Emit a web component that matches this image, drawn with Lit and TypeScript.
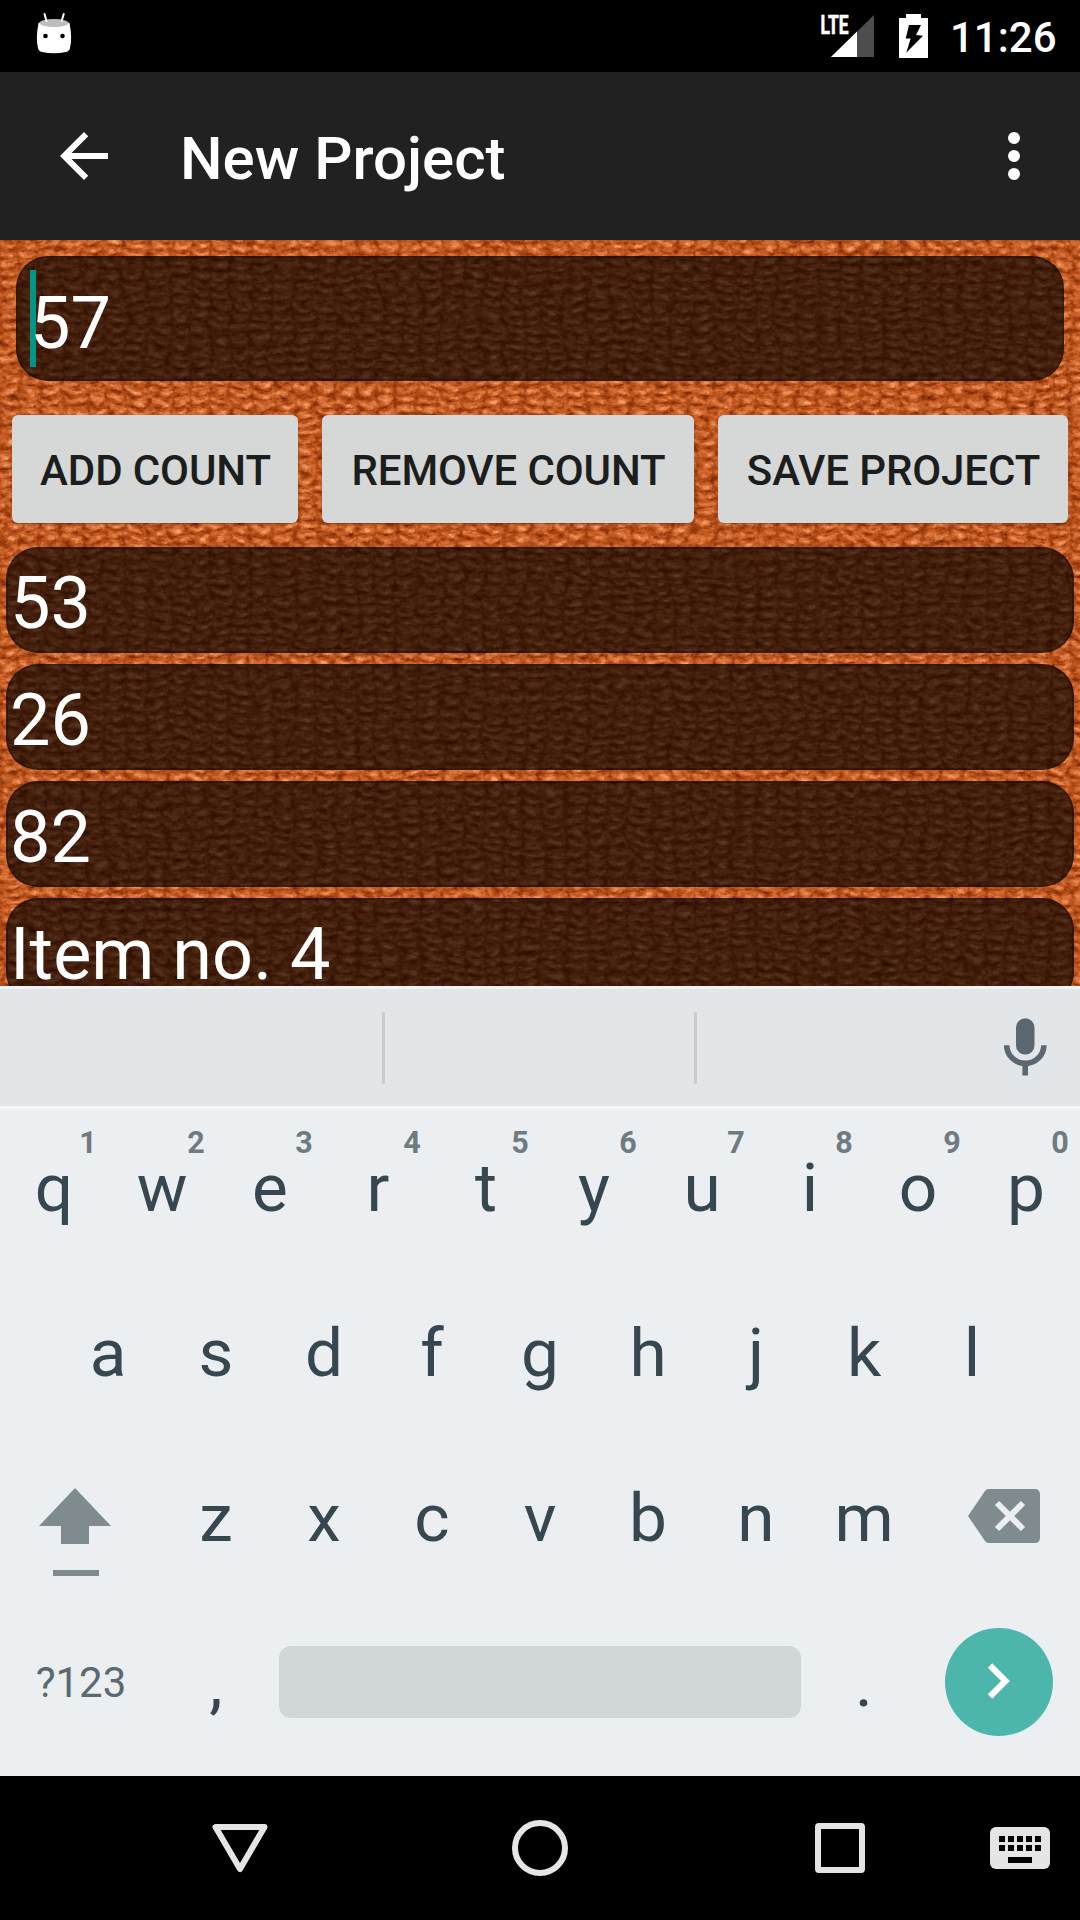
import { LitElement, html, css, svg } from "lit";
import { customElement, state } from "lit/decorators.js";

/** Woven wool surface: stitch pattern, warped and mixed with fibre noise. */
@customElement("knit-backdrop")
export class KnitBackdrop extends LitElement {
  static styles = css`
    :host { display: block; overflow: hidden; }
    svg { display: block; width: 100%; height: 100%; }
  `;
  render() {
    return html`<svg viewBox="0 0 1080 746" preserveAspectRatio="none" aria-hidden="true">
      <defs>
        <pattern id="stitch" width="21" height="10.500" patternUnits="userSpaceOnUse">
          <rect width="21" height="10.500" fill="#787878"></rect>
          <path d="M0 0V10.500M21 0V10.500" stroke="#636363" stroke-width="5"></path>
          <path d="M3 2.500 L10 6 L18 3.500" stroke="#989898" stroke-width="3.400" fill="none" stroke-linecap="round"></path>
          <path d="M10 5 L14 6" stroke="#bcbcbc" stroke-width="3" fill="none" stroke-linecap="round"></path>
          <path d="M2 8.500 L9 10 L17 8.500" stroke="#515151" stroke-width="2" fill="none"></path>
        </pattern>
        <filter id="wool" x="0" y="0" width="100%" height="100%" color-interpolation-filters="sRGB">
          <feTurbulence type="fractalNoise" baseFrequency="0.014 0.02" numOctaves="3" seed="8" result="warp"></feTurbulence>
          <feDisplacementMap in="SourceGraphic" in2="warp" scale="24" xChannelSelector="R" yChannelSelector="G" result="knit"></feDisplacementMap>
          <feGaussianBlur in="knit" stdDeviation="0.7" result="soft"></feGaussianBlur>
          <feTurbulence type="fractalNoise" baseFrequency="0.11 0.18" numOctaves="3" seed="21" result="fibre"></feTurbulence>
          <feColorMatrix in="fibre" type="matrix" values="1 0 0 0 0  1 0 0 0 0  1 0 0 0 0  0 0 0 0 1" result="grey"></feColorMatrix>
          <feComposite in="soft" in2="grey" operator="arithmetic" k1="0" k2="0.85" k3="0.65" k4="-0.22" result="mix"></feComposite>
          <feComponentTransfer in="mix">
            <feFuncR type="table" tableValues="0.2 0.52 0.75 0.9 0.99"></feFuncR>
            <feFuncG type="table" tableValues="0.04 0.18 0.34 0.52 0.72"></feFuncG>
            <feFuncB type="table" tableValues="0 0.03 0.12 0.3 0.5"></feFuncB>
            <feFuncA type="linear" slope="0" intercept="1"></feFuncA>
          </feComponentTransfer>
        </filter>
      </defs>
      <g filter="url(#wool)"><rect x="-20" y="-20" width="1120" height="786" fill="url(#stitch)"></rect></g>
    </svg>`;
  }
}

@customElement("status-bar")
export class StatusBar extends LitElement {
  static styles = css`
    :host { display: flex; height: 72px; background: #000; color: #fff; align-items: flex-start; }
    svg { display: block; flex: none; }
    .debug { margin-left: 30px; }
    .signal { margin-left: auto; }
    .battery { margin-left: 18px; }
    .time { font: 500 42px/72px Roboto, sans-serif; width: 106px; margin: 2px 24px 0 14px; box-sizing: border-box; white-space: nowrap; }
  `;
  render() {
    return html`
      <svg class="debug" width="48" height="72" viewBox="30 0 48 72">
        <path d="M38.500 23 Q54 16 69.500 23 Q72.500 38 70 48 Q69.500 51 66 52 Q54 54.500 42 52 Q38.500 51 38 48 Q35.500 38 38.500 23Z" fill="#fff"></path>
        <ellipse cx="54" cy="23" rx="14.500" ry="4" fill="#bdbdbd"></ellipse>
        <path d="M44.500 14 L46.500 21 M63.700 14 L61.700 21" stroke="#fff" stroke-width="2" stroke-linecap="round"></path>
        <circle cx="45.500" cy="36" r="2.300"></circle><circle cx="62.500" cy="36" r="2.300"></circle>
      </svg>
      <svg class="signal" width="60" height="72" viewBox="818 0 60 72">
        <path d="M831 57 L874 15 V57Z" fill="#4d4d4d"></path>
        <path d="M831 57 L857 31.600 V57Z" fill="#fff"></path>
        <text x="820.500" y="33.500" textLength="28" lengthAdjust="spacingAndGlyphs" fill="#fff" stroke="#fff" stroke-width="0.700" font-family="Roboto, sans-serif" font-weight="700" font-size="26">LTE</text>
      </svg>
      <svg class="battery" width="40" height="72" viewBox="896 0 40 72">
        <path d="M906 14h15v4h7v40h-29V18h7Z" fill="#fff"></path>
        <path d="M909 25h12l-5 10 7 .7L906.300 52.700 910.700 38.500h-5Z"></path>
      </svg>
      <div class="time">11:26</div>`;
  }
}

@customElement("app-toolbar")
export class AppToolbar extends LitElement {
  static styles = css`
    :host { display: flex; height: 168px; background: #212121; color: #fff; align-items: center; padding: 0 30px 0 48px; box-sizing: border-box; }
    svg { display: block; flex: none; fill: #fff; }
    .title { flex: 1; margin-left: 60px; padding-top: 6px; font: 500 60px/70px Roboto, sans-serif; white-space: nowrap; }
  `;
  render() {
    return html`
      <svg width="72" height="72" viewBox="0 0 24 24"><path d="M20 11H7.830l5.590-5.590L12 4l-8 8 8 8 1.410-1.410L7.830 13H20z"></path></svg>
      <div class="title">New Project</div>
      <svg width="72" height="72" viewBox="0 0 24 24"><circle cx="12" cy="6" r="2"></circle><circle cx="12" cy="12" r="2"></circle><circle cx="12" cy="18" r="2"></circle></svg>`;
  }
}

@customElement("project-form")
export class ProjectForm extends LitElement {
  static styles = css`
    :host { display: grid; height: 746px; overflow: hidden; font-family: Roboto, sans-serif; }
    .backdrop, .form { grid-area: 1 / 1; height: 746px; min-width: 0; }
    .form { position: relative; overflow: hidden; }
    .field { box-sizing: border-box; background: rgba(0, 0, 0, 0.65); border: 2px solid rgba(0, 0, 0, 0.25); border-radius: 32px; color: #fff; font-size: 72px; white-space: nowrap; }
    .name { margin: 16px 16px 0; height: 125px; display: flex; align-items: flex-start; padding: 12px 0 0 12px; }
    .caret { width: 6px; height: 97px; background: #009688; flex: none; }
    .value { line-height: 84px; margin: 12px 0 0 -6px; }
    .buttons { display: flex; gap: 24px; margin: 34px 12px 24px; }
    button { border: 0; padding: 4px 0 0 1px; margin: 0; height: 108px; border-radius: 6px; background: #d6d7d7; color: #1c1d1d; font: 500 42px/50px Roboto, sans-serif; letter-spacing: -0.1px; text-align: center; white-space: nowrap; box-shadow: 0 1px 2px rgba(0, 0, 0, 0.25); }
    .add { width: 286px; } .remove { width: 372px; } .save { width: 350px; }
    .counts { display: flex; flex-direction: column; gap: 11px; padding: 0 6px; }
    .count { height: 106px; flex: none; padding: 13px 0 0 2px; line-height: 78px; }
    .count { line-height: 84px; }
  `;
  @state() private counts = ["53", "26", "82", "Item no. 4"];
  render() {
    return html`
      <knit-backdrop class="backdrop"></knit-backdrop>
      <div class="form">
        <div class="field name"><span class="caret"></span><span class="value">57</span></div>
        <div class="buttons">
          <button class="add">ADD COUNT</button><button class="remove">REMOVE COUNT</button><button class="save">SAVE PROJECT</button>
        </div>
        <div class="counts">${this.counts.map((c) => html`<div class="field count">${c}</div>`)}</div>
      </div>`;
  }
}

@customElement("soft-keyboard")
export class SoftKeyboard extends LitElement {
  static styles = css`
    :host { display: block; height: 790px; background: #ebeff2; font-family: Roboto, sans-serif; color: #37474f; }
    svg { display: block; flex: none; }
    .strip { display: flex; box-sizing: border-box; height: 123px; background: #e2e6e9; border-top: 3px solid #f1f2f3; border-bottom: 3px solid #f6f8f9; align-items: center; }
    .slot { box-sizing: border-box; height: 72px; border-right: 3px solid #c9cdcf; }
    .first { width: 385px; } .second { width: 312px; }
    .mic { margin-left: auto; margin-right: 19px; }
    .row { display: flex; height: 165px; justify-content: center; }
    .key { width: 108px; position: relative; text-align: center; font-size: 67.500px; line-height: 80px; padding-top: 39px; box-sizing: border-box; }
    .hint { position: absolute; left: 72px; top: 16px; width: 32px; font-size: 30.500px; line-height: 36px; font-weight: 700; color: #6f7b81; }
    .wide { width: 162px; }
    .symbols { width: 162px; padding-top: 54px; box-sizing: border-box; text-align: center; font-size: 42px; line-height: 50px; color: #5b6a71; }
    .space { width: 522px; height: 72px; border-radius: 12px; background: #d1d6d9; margin: 42px 9px 0; }
  `;
  private key(letter: string, hint = "") {
    return html`<div class="key">${letter}${hint ? html`<span class="hint">${hint}</span>` : ""}</div>`;
  }
  render() {
    return html`
      <div class="strip">
        <div class="slot first"></div><div class="slot second"></div>
        <svg class="mic" width="72" height="72" viewBox="989 1012 72 72">
          <rect x="1016" y="1018.300" width="18.500" height="36.300" rx="9.200" fill="#5b6870"></rect>
          <path d="M1006.700 1045.300a18.500 18 0 0 0 37.200 0M1025.200 1063v12.600" fill="none" stroke="#5b6870" stroke-width="5.600"></path>
        </svg>
      </div>
      <div class="row">${[..."qwertyuiop"].map((l, i) => this.key(l, String((i + 1) % 10)))}</div>
      <div class="row">${[..."asdfghjkl"].map((l) => this.key(l))}</div>
      <div class="row">
        <svg class="wide" height="165" viewBox="0 1439 162 165" fill="#808b90">
          <path d="M75 1488 L111 1526H89V1544H61V1526H39Z"></path><path d="M53 1570h46v6H53z"></path>
        </svg>
        ${[..."zxcvbnm"].map((l) => this.key(l))}
        <svg class="wide" height="165" viewBox="918 1439 162 165">
          <path d="M989 1489H1034.500Q1040 1489 1040 1494.500V1537.500Q1040 1543 1034.500 1543H989Q986.500 1543 985 1541L968 1516 985 1491Q986.500 1489 989 1489Z" fill="#808b90"></path>
          <path d="M997 1503 L1023 1529M1023 1503 L997 1529" stroke="#ebeff2" stroke-width="6"></path>
        </svg>
      </div>
      <div class="row">
        <div class="symbols">?123</div>
        ${this.key(",")}<div class="space"></div>${this.key(".")}
        <svg class="wide" height="165" viewBox="918 1604 162 165">
          <circle cx="999" cy="1682" r="54" fill="#4db6ac"></circle>
          <path d="M990 1665.500 L1005.500 1681 990 1696.500" fill="none" stroke="#fff" stroke-width="6.200"></path>
        </svg>
      </div>`;
  }
}

@customElement("nav-bar")
export class NavBar extends LitElement {
  static styles = css`
    :host { display: block; height: 144px; background: #000; }
    svg { display: block; }
  `;
  render() {
    const dots = [0, 1, 2, 3, 4].map((i) => svg`<path d="M${999 + i * 9} 60h6v6h-6zM${999 + i * 9} 69h6v6h-6z" fill="#000"></path>`);
    return html`<svg width="1080" height="144" viewBox="0 0 1080 144">
      <path d="M215.500 51H264.500L240 93Z" fill="none" stroke="#e5e5e5" stroke-width="6" stroke-linejoin="round"></path>
      <circle cx="540" cy="72" r="25" fill="none" stroke="#e5e5e5" stroke-width="6"></circle>
      <rect x="818" y="50" width="44" height="44" rx="1" fill="none" stroke="#e5e5e5" stroke-width="6" stroke-linejoin="round"></rect>
      <rect x="990" y="51" width="60" height="42" rx="6" fill="#e5e5e5"></rect>
      ${dots}<path d="M1008 81h24v6h-24z" fill="#000"></path>
    </svg>`;
  }
}

@customElement("app-root")
export class AppRoot extends LitElement {
  static styles = css`
    :host { display: flex; flex-direction: column; width: 1080px; height: 1920px; overflow: hidden; background: #000; }
  `;
  render() {
    return html`<status-bar></status-bar><app-toolbar></app-toolbar><project-form></project-form><soft-keyboard></soft-keyboard><nav-bar></nav-bar>`;
  }
}
